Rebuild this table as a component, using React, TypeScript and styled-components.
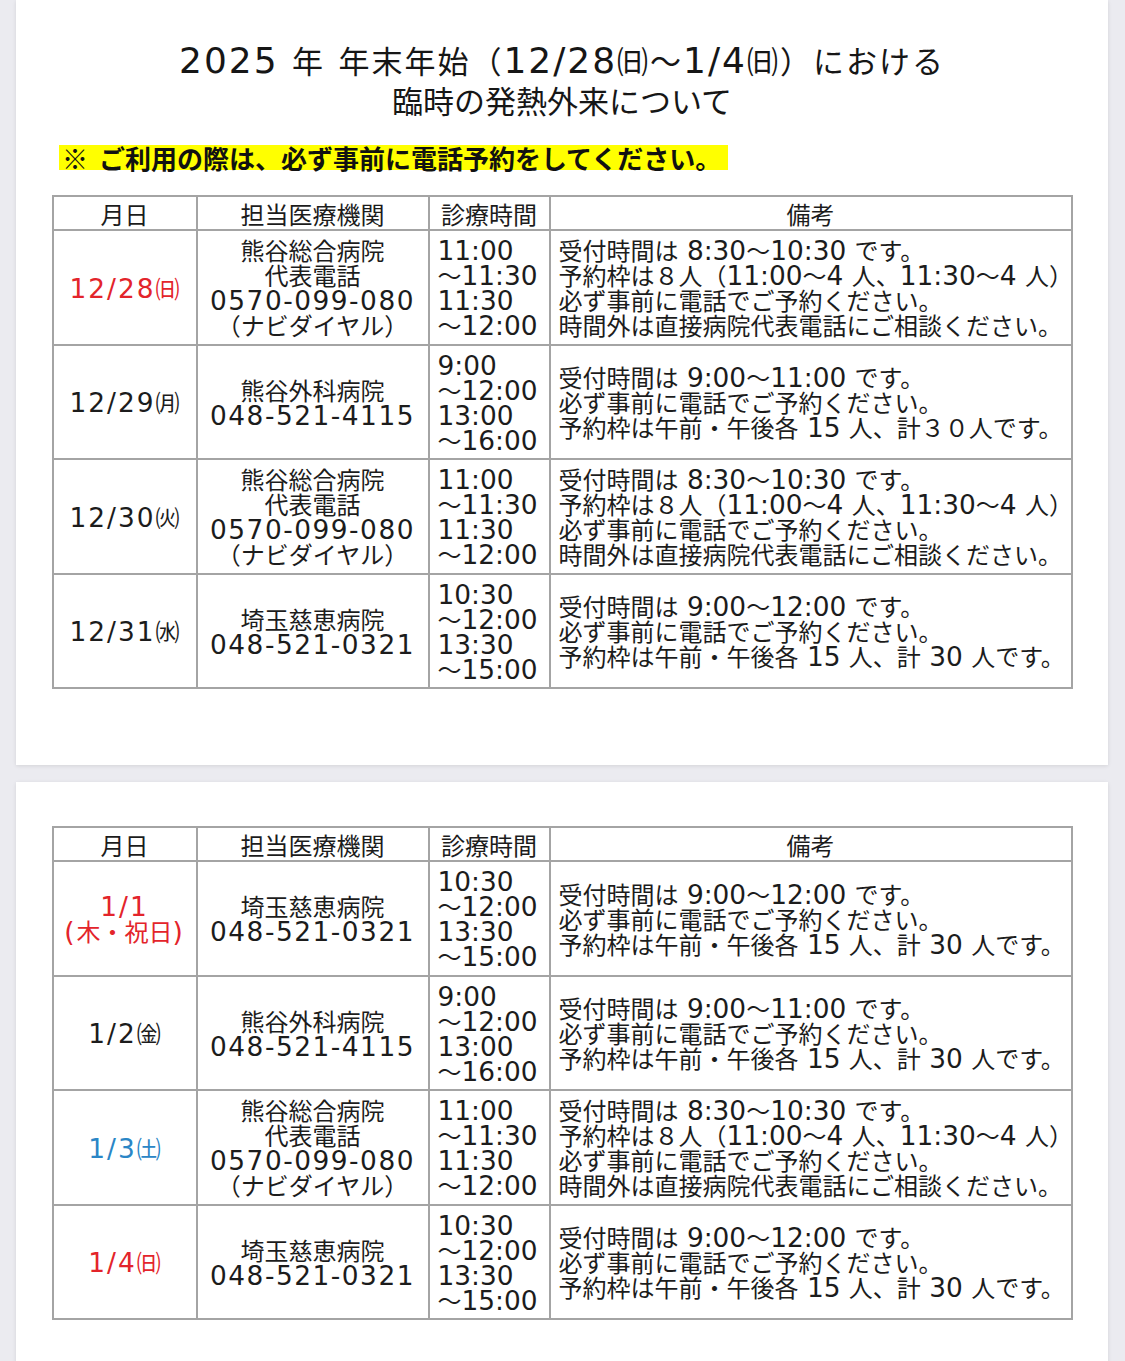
import React from 'react';
import styled, { createGlobalStyle } from 'styled-components';

type Tone = 'plain' | 'holiday' | 'saturday';

type Row = {
	date: string[];
	tone: Tone;
	clinic: string[];
	hours: string[];
	notes: string[];
};

const SOUGOU = {
	clinic: ['熊谷総合病院', '代表電話', '0570-099-080', '（ナビダイヤル）'],
	hours: ['11:00', '～11:30', '11:30', '～12:00'],
	notes: [
		'受付時間は 8:30～10:30 です。',
		'予約枠は８人（11:00～4 人、11:30～4 人）',
		'必ず事前に電話でご予約ください。',
		'時間外は直接病院代表電話にご相談ください。',
	],
};

const GEKA = {
	clinic: ['熊谷外科病院', '048-521-4115'],
	hours: ['9:00', '～12:00', '13:00', '～16:00'],
};

const JIKEI = {
	clinic: ['埼玉慈恵病院', '048-521-0321'],
	hours: ['10:30', '～12:00', '13:30', '～15:00'],
	notes: [
		'受付時間は 9:00～12:00 です。',
		'必ず事前に電話でご予約ください。',
		'予約枠は午前・午後各 15 人、計 30 人です。',
	],
};

const gekaNotes = (total: string) => [
	'受付時間は 9:00～11:00 です。',
	'必ず事前に電話でご予約ください。',
	`予約枠は午前・午後各 15 人、計${total}人です。`,
];

const FIRST_PAGE: Row[] = [
	{ date: ['12/28㈰'], tone: 'holiday', ...SOUGOU },
	{ date: ['12/29㈪'], tone: 'plain', ...GEKA, notes: gekaNotes('３０') },
	{ date: ['12/30㈫'], tone: 'plain', ...SOUGOU },
	{ date: ['12/31㈬'], tone: 'plain', ...JIKEI },
];

const SECOND_PAGE: Row[] = [
	{ date: ['1/1', '(木・祝日)'], tone: 'holiday', ...JIKEI },
	{ date: ['1/2㈮'], tone: 'plain', ...GEKA, notes: gekaNotes(' 30 ') },
	{ date: ['1/3㈯'], tone: 'saturday', ...SOUGOU },
	{ date: ['1/4㈰'], tone: 'holiday', ...JIKEI },
];

const TONE_COLORS: Record<Tone, string> = {
	plain: '#1c1c1c',
	holiday: '#e3242b',
	saturday: '#2a86c6',
};

// digits and ascii come out wider in the original, so they get their own run
const withLatin = (text: string) =>
	text
		.split(/([\x20-\x7e]+)/)
		.filter(Boolean)
		.map((part, i) =>
			/^[\x20-\x7e]+$/.test(part) ? <Latin key={i}>{part}</Latin> : part
		);

const Lines = ({ lines }: { lines: string[] }) => (
	<>
		{lines.map((line) => (
			<Line key={line}>{withLatin(line)}</Line>
		))}
	</>
);

const ScheduleTable = ({ rows }: { rows: Row[] }) => (
	<Table>
		<colgroup>
			<col style={{ width: 144 }} />
			<col style={{ width: 232 }} />
			<col style={{ width: 121 }} />
			<col style={{ width: 522 }} />
		</colgroup>
		<thead>
			<tr>
				<HeadCell>月日</HeadCell>
				<HeadCell>担当医療機関</HeadCell>
				<HeadCell>診療時間</HeadCell>
				<HeadCell>備考</HeadCell>
			</tr>
		</thead>
		<tbody>
			{rows.map((row, i) => (
				<BodyRow key={i}>
					<DateCell $tone={row.tone}>
						<Lines lines={row.date} />
					</DateCell>
					<ClinicCell>
						<Lines lines={row.clinic} />
					</ClinicCell>
					<TextCell>
						<Lines lines={row.hours} />
					</TextCell>
					<TextCell>
						<Lines lines={row.notes} />
					</TextCell>
				</BodyRow>
			))}
		</tbody>
	</Table>
);

export default function App() {
	return (
		<>
			<GlobalStyle />
			<Viewer>
				<Page $top={40} $bottom={76}>
					<Title>
						<TitleLine $spread>
							{withLatin('2025 年 年末年始（12/28㈰～1/4㈰）における')}
						</TitleLine>
						<TitleLine>臨時の発熱外来について</TitleLine>
					</Title>
					<NoticeRow>
						<Notice>※ ご利用の際は、必ず事前に電話予約をしてください。</Notice>
					</NoticeRow>
					<ScheduleTable rows={FIRST_PAGE} />
				</Page>
				<Page $top={44} $bottom={120}>
					<ScheduleTable rows={SECOND_PAGE} />
				</Page>
			</Viewer>
		</>
	);
}

const GlobalStyle = createGlobalStyle`
	* {
		box-sizing: border-box;
	}

	body {
		margin: 0;
		background: #ebebf0;
		font-family: 'Noto Sans CJK JP', 'Noto Sans', sans-serif;
		color: #1c1c1c;
	}
`;

const Viewer = styled.main`
	display: flex;
	flex-direction: column;
	gap: 17px;
	padding: 0 17px 0 16px;
	overflow: hidden;
	height: 1361px;
`;

const Page = styled.section<{ $top: number; $bottom: number }>`
	flex-shrink: 0;
	display: flex;
	flex-direction: column;
	align-items: center;
	padding: ${(p) => p.$top}px 36px ${(p) => p.$bottom}px;
	background: #ffffff;
	box-shadow: 0 1px 4px rgba(0, 0, 0, 0.1);
`;

const Latin = styled.span`
	font-family: 'DejaVu Sans', 'Liberation Sans', sans-serif;
	font-size: 1.1em;
	line-height: 0;
`;

const Title = styled.h1`
	margin: 0;
	font-size: 31px;
	font-weight: 400;
	line-height: 40px;
	text-align: center;
	color: #161616;

	${Latin} {
		font-size: 1.16em;
		letter-spacing: 2px;
	}
`;

const TitleLine = styled.span<{ $spread?: boolean }>`
	display: block;
	white-space: nowrap;
	letter-spacing: ${(p) => (p.$spread ? '2px' : '0')};
`;

const NoticeRow = styled.div`
	align-self: stretch;
	display: flex;
	padding: 25px 0 25px 7px;
`;

const Notice = styled.span`
	height: 25px;
	padding: 0 7px 0 3px;
	background: #ffff00;
	font-size: 26px;
	font-weight: 700;
	line-height: 25px;
	word-spacing: 5px;
	white-space: nowrap;
	color: #111111;
`;

const Table = styled.table`
	width: 1019px;
	border-collapse: collapse;
	table-layout: fixed;
	border: 2px solid #a4a4a4;
	font-size: 24px;
	line-height: 25px;
`;

const HeadCell = styled.th`
	height: 34px;
	padding: 0;
	border: 2px solid #a4a4a4;
	font-weight: 400;
	text-align: center;
	vertical-align: middle;
`;

const BodyRow = styled.tr`
	height: 114.5px;
`;

const Cell = styled.td`
	padding: 0 0 0 8px;
	border: 2px solid #a4a4a4;
	vertical-align: middle;
	text-align: left;
`;

const DateCell = styled(Cell)<{ $tone: Tone }>`
	padding: 0;
	text-align: center;
	color: ${(p) => TONE_COLORS[p.$tone]};

	${Latin} {
		letter-spacing: 2px;
	}
`;

const ClinicCell = styled(Cell)`
	padding: 0;
	text-align: center;

	${Latin} {
		letter-spacing: 1.5px;
	}
`;

const TextCell = styled(Cell)``;

const Line = styled.span`
	display: block;
	white-space: nowrap;
`;
